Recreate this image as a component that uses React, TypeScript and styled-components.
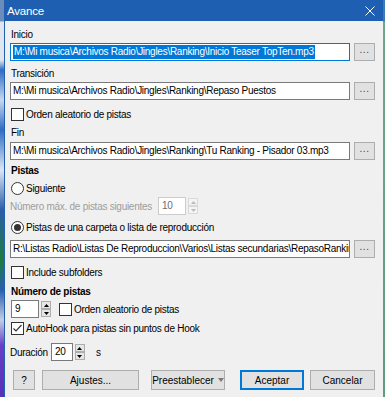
import styled, { createGlobalStyle } from 'styled-components';

const GlobalStyle = createGlobalStyle`
  * { box-sizing: border-box; }
  html, body { margin: 0; padding: 0; }
  body {
    width: 385px;
    height: 397px;
    overflow: hidden;
    font-family: 'Liberation Sans', Arial, sans-serif;
    font-size: 10px;
    letter-spacing: -0.27px;
    color: #000;
    background: #f0f0f0;
  }
`;

const Page = styled.div`
  display: flex;
  height: 397px;
`;

const LeftStrip = styled.div`
  width: 5px;
  background: linear-gradient(
    to bottom,
    #6c8cbc 0,
    #6c8cbc 21px,
    #dfe6ef 22px,
    #dfe6ef 60px,
    #2f6cc4 70px,
    #c9d8ee 100px,
    #2f6cc4 130px,
    #dce6f4 170px,
    #2c5ea8 210px,
    #1c7d3c 260px,
    #2a5db0 290px,
    #c3cfe2 320px,
    #6a3fc8 345px,
    #5a2fb8 397px
  );
  border-right: 1px solid #1f5fae;
`;

const RightStrip = styled.div`
  width: 2px;
  background: linear-gradient(to bottom, #3e78b8 0, #3e78b8 21px, #6ea88c 22px, #5d9c7c 397px);
`;

const Window = styled.div`
  width: 378px;
  display: flex;
  flex-direction: column;
`;

const TitleBar = styled.div`
  height: 21px;
  background: #1f5fb2;
  color: #fff;
  display: flex;
  align-items: center;
  justify-content: space-between;
  padding: 0 8px 0 2px;
  font-size: 11.5px;
  letter-spacing: -0.2px;
`;

const Body = styled.div`
  flex: 1;
  background: #f0f0f0;
  padding: 7px 8px 0 5px;
  display: flex;
  flex-direction: column;
`;

const Label = styled.div<{ $mt?: number; $bold?: boolean }>`
  height: 14px;
  line-height: 14px;
  margin-top: ${(p) => p.$mt ?? 0}px;
  padding-left: 1px;
  font-weight: ${(p) => (p.$bold ? 700 : 400)};
`;

const PathRow = styled.div<{ $mt?: number }>`
  display: flex;
  gap: 4px;
  height: 18px;
  margin-top: ${(p) => p.$mt ?? 0}px;
`;

const PathBox = styled.div<{ $focused?: boolean }>`
  flex: 1;
  min-width: 0;
  background: #fff;
  border: 1px solid ${(p) => (p.$focused ? '#0078d7' : '#7a7a7a')};
  padding: 0 2px;
  line-height: 16px;
  white-space: nowrap;
  overflow: hidden;
`;

const Selected = styled.span`
  background: #0078d7;
  color: #fff;
  display: inline-block;
  line-height: 14px;
  padding: 0 1px;
`;

const BrowseButton = styled.button`
  width: 21px;
  height: 18px;
  padding: 0 0 4px;
  background: #e1e1e1;
  border: 1px solid #adadad;
  font: inherit;
  font-size: 10px;
  letter-spacing: 0.5px;
  color: #444;
  line-height: 10px;
`;

const CheckRow = styled.div<{ $mt?: number; $ml?: number; $disabled?: boolean }>`
  display: flex;
  align-items: center;
  gap: 2px;
  height: 13px;
  margin-top: ${(p) => p.$mt ?? 0}px;
  margin-left: ${(p) => p.$ml ?? 1}px;
  color: ${(p) => (p.$disabled ? '#9d9d9d' : '#000')};
`;

const Box = styled.span`
  width: 13px;
  height: 13px;
  border: 1px solid #333;
  background: #fff;
  display: flex;
  align-items: center;
  justify-content: center;
  flex-shrink: 0;
`;

const RadioCircle = styled.span`
  width: 13px;
  height: 13px;
  border: 1px solid #333;
  border-radius: 50%;
  background: #fff;
  display: flex;
  align-items: center;
  justify-content: center;
  flex-shrink: 0;
`;

const RadioDot = styled.span`
  width: 7px;
  height: 7px;
  border-radius: 50%;
  background: #333;
`;

const SpinRow = styled.div<{ $mt?: number }>`
  display: flex;
  align-items: center;
  height: 18px;
  margin-top: ${(p) => p.$mt ?? 0}px;
`;

const Muted = styled.span`
  color: #9d9d9d;
`;

const SpinInput = styled.div<{ $w: number; $ml?: number; $disabled?: boolean }>`
  width: ${(p) => p.$w}px;
  height: 18px;
  margin-left: ${(p) => p.$ml ?? 0}px;
  background: #fff;
  border: 1px solid ${(p) => (p.$disabled ? '#cccccc' : '#7a7a7a')};
  color: ${(p) => (p.$disabled ? '#6d6d6d' : '#000')};
  padding-left: 3px;
  line-height: 16px;
`;

const SpinArrows = styled.div`
  width: 10px;
  height: 18px;
  margin-left: 2px;
  display: flex;
  flex-direction: column;
  justify-content: space-between;
  padding: 1px 0;
`;

const SpinButton = styled.div<{ $disabled?: boolean }>`
  height: 8px;
  background: ${(p) => (p.$disabled ? '#f4f4f4' : '#e6e6e6')};
  border: 1px solid ${(p) => (p.$disabled ? '#d9d9d9' : '#adadad')};
  display: flex;
  align-items: center;
  justify-content: center;
`;

const Suffix = styled.span<{ $ml: number }>`
  margin-left: ${(p) => p.$ml}px;
`;

const ButtonRow = styled.div`
  display: flex;
  height: 20px;
  margin-top: 9px;
`;

const Button = styled.button<{ $w: number; $ml: number; $default?: boolean }>`
  width: ${(p) => p.$w}px;
  height: 20px;
  margin-left: ${(p) => p.$ml}px;
  padding: 0;
  background: #e1e1e1;
  border: 1px solid ${(p) => (p.$default ? '#0078d7' : '#adadad')};
  box-shadow: ${(p) => (p.$default ? 'inset 0 0 0 1px #0078d7' : 'none')};
  font: inherit;
  color: #000;
  display: flex;
  align-items: center;
  justify-content: center;
  gap: 4px;
`;

const Caret = styled.span`
  width: 0;
  height: 0;
  border-left: 3.5px solid transparent;
  border-right: 3.5px solid transparent;
  border-top: 4px solid #7a7a7a;
`;

const Tri = ({ up, color = '#000' }: { up?: boolean; color?: string }) => (
  <svg width="5" height="3" viewBox="0 0 5 3">
    <polygon points={up ? '0,3 5,3 2.5,0' : '0,0 5,0 2.5,3'} fill={color} />
  </svg>
);

const Check = ({ checked, label, mt, ml }: { checked?: boolean; label: string; mt?: number; ml?: number }) => (
  <CheckRow $mt={mt} $ml={ml}>
    <Box>
      {checked && (
        <svg width="11" height="11" viewBox="0 0 11 11">
          <polyline points="1.5,5.5 4,8 9.5,2" fill="none" stroke="#333" strokeWidth="1.2" />
        </svg>
      )}
    </Box>
    {label}
  </CheckRow>
);

const Radio = ({ checked, label, mt }: { checked?: boolean; label: string; mt?: number }) => (
  <CheckRow $mt={mt}>
    <RadioCircle>{checked && <RadioDot />}</RadioCircle>
    {label}
  </CheckRow>
);

const Spin = ({ value, w, ml, disabled }: { value: string; w: number; ml?: number; disabled?: boolean }) => (
  <>
    <SpinInput $w={w} $ml={ml} $disabled={disabled}>
      {value}
    </SpinInput>
    <SpinArrows>
      <SpinButton $disabled={disabled}>
        <Tri up color={disabled ? '#bbb' : '#000'} />
      </SpinButton>
      <SpinButton $disabled={disabled}>
        <Tri color={disabled ? '#bbb' : '#000'} />
      </SpinButton>
    </SpinArrows>
  </>
);

export default function App() {
  return (
    <>
      <GlobalStyle />
      <Page>
        <LeftStrip />
        <Window>
          <TitleBar>
            <span>Avance</span>
            <svg width="10" height="10" viewBox="0 0 10 10">
              <path d="M0.5 0.5 L9.5 9.5 M9.5 0.5 L0.5 9.5" stroke="#fff" strokeWidth="1" />
            </svg>
          </TitleBar>
          <Body>
            <Label>Inicio</Label>
            <PathRow $mt={1}>
              <PathBox $focused>
                <Selected>M:\Mi musica\Archivos Radio\Jingles\Ranking\Inicio Teaser TopTen.mp3</Selected>
              </PathBox>
              <BrowseButton>...</BrowseButton>
            </PathRow>

            <Label $mt={6}>Transición</Label>
            <PathRow $mt={1}>
              <PathBox>M:\Mi musica\Archivos Radio\Jingles\Ranking\Repaso Puestos</PathBox>
              <BrowseButton>...</BrowseButton>
            </PathRow>
            <Check mt={8} label="Orden aleatorio de pistas" />

            <Label $mt={5}>Fin</Label>
            <PathRow $mt={2}>
              <PathBox>M:\Mi musica\Archivos Radio\Jingles\Ranking\Tu Ranking - Pisador 03.mp3</PathBox>
              <BrowseButton>...</BrowseButton>
            </PathRow>

            <Label $mt={4} $bold>
              Pistas
            </Label>
            <Radio mt={4} label="Siguiente" />
            <SpinRow $mt={2}>
              <Muted>Número máx. de pistas siguientes</Muted>
              <Spin value="10" w={28} ml={6} disabled />
            </SpinRow>
            <Radio mt={6} checked label="Pistas de una carpeta o lista de reproducción" />
            <PathRow $mt={6}>
              <PathBox>R:\Listas Radio\Listas De Reproduccion\Varios\Listas secundarias\RepasoRanking</PathBox>
              <BrowseButton>...</BrowseButton>
            </PathRow>
            <Check mt={8} label="Include subfolders" />

            <Label $mt={6} $bold>
              Número de pistas
            </Label>
            <SpinRow $mt={1}>
              <Spin value="9" w={28} ml={1} />
              <Check ml={8} label="Orden aleatorio de pistas" />
            </SpinRow>
            <Check mt={4} checked label="AutoHook para pistas sin puntos de Hook" />
            <SpinRow $mt={8}>
              <span>Duración</span>
              <Spin value="20" w={22} ml={3} />
              <Suffix $ml={11}>s</Suffix>
            </SpinRow>

            <ButtonRow>
              <Button $w={22} $ml={3}>
                ?
              </Button>
              <Button $w={97} $ml={7}>
                Ajustes...
              </Button>
              <Button $w={74} $ml={12}>
                Preestablecer <Caret />
              </Button>
              <Button $w={64} $ml={15} $default>
                Aceptar
              </Button>
              <Button $w={65} $ml={6}>
                Cancelar
              </Button>
            </ButtonRow>
          </Body>
        </Window>
        <RightStrip />
      </Page>
    </>
  );
}
